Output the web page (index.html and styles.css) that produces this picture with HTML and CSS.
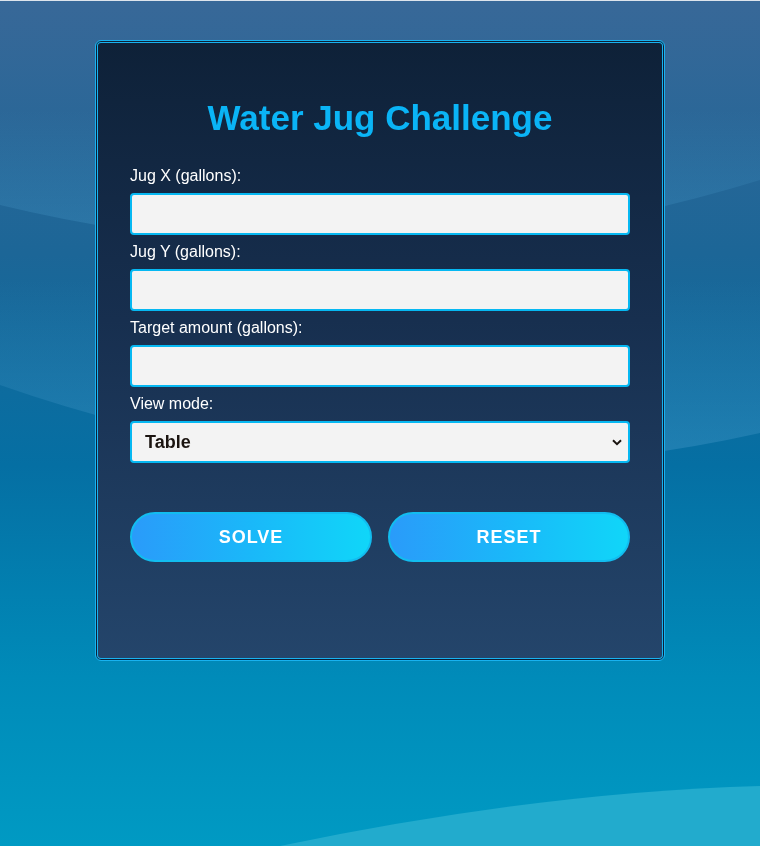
FILE: index.html
```html
<!DOCTYPE html>
<html lang="en">
<head>
<meta charset="utf-8">
<title>Water Jug Challenge</title>
<link rel="stylesheet" href="styles.css">
</head>
<body>
<svg class="bg" viewBox="0 0 760 846" preserveAspectRatio="none" aria-hidden="true">
  <defs>
    <linearGradient id="sea" x1="0" y1="0" x2="0" y2="1">
      <stop offset="0" stop-color="#386898"/>
      <stop offset="0.3" stop-color="#1c6697"/>
      <stop offset="0.55" stop-color="#056fa3"/>
      <stop offset="0.8" stop-color="#008bb9"/>
      <stop offset="1" stop-color="#009ac3"/>
    </linearGradient>
    <linearGradient id="band1" gradientUnits="userSpaceOnUse" x1="0" y1="110" x2="0" y2="240">
      <stop offset="0" stop-color="#4a9ccc" stop-opacity="0"/>
      <stop offset="1" stop-color="#4a9ccc" stop-opacity="0.32"/>
    </linearGradient>
    <linearGradient id="band2" gradientUnits="userSpaceOnUse" x1="0" y1="280" x2="0" y2="450">
      <stop offset="0" stop-color="#4a9ccc" stop-opacity="0"/>
      <stop offset="1" stop-color="#4a9ccc" stop-opacity="0.36"/>
    </linearGradient>
  </defs>
  <rect width="760" height="846" fill="url(#sea)"/>
  <path d="M0,60 L760,60 L760,180 Q380,297 0,205 Z" fill="url(#band1)"/>
  <path d="M0,240 L760,240 L760,433 Q380,518 0,385 Z" fill="url(#band2)"/>
  <path d="M280,846 Q540,792 760,786 L760,846 Z" fill="#22abcd"/>
  <rect width="760" height="1" fill="#dde4ec"/>
</svg>

<main class="card">
  <h1 class="title">Water Jug Challenge</h1>
  <form class="form">
    <label class="label" for="jugx">Jug X (gallons):</label>
    <input class="field" id="jugx" type="number">
    <label class="label" for="jugy">Jug Y (gallons):</label>
    <input class="field" id="jugy" type="number">
    <label class="label" for="target">Target amount (gallons):</label>
    <input class="field" id="target" type="number">
    <label class="label" for="mode">View mode:</label>
    <select class="field select" id="mode">
      <option>Table</option>
      <option>Steps</option>
    </select>
    <div class="actions">
      <button type="button" class="btn">SOLVE</button>
      <button type="reset" class="btn">RESET</button>
    </div>
  </form>
</main>
</body>
</html>
```

FILE: styles.css
```css
* { box-sizing: border-box; }

html, body {
  margin: 0;
  padding: 0;
}

body {
  min-height: 100vh;
  font-family: "Liberation Sans", Arial, sans-serif;
  color: #fff;
  padding-top: 40px;
  padding-bottom: 1px;
}

.bg {
  position: fixed;
  inset: 0;
  width: 100%;
  height: 100%;
  z-index: -1;
  display: block;
}

.card {
  width: 570px;
  margin: 0 auto;
  padding: 34px 34px 98px;
  border: 1px solid #18b2f0;
  border-radius: 6px;
  background: linear-gradient(180deg, #0e2138 0%, #172f4f 45%, #24456b 100%);
  box-shadow: inset 0 0 0 1px #0e2036, inset 0 0 0 2px #18b2f0;
}

.title {
  margin: 23px 0 29px;
  font-size: 35px;
  line-height: 40px;
  font-weight: bold;
  text-align: center;
  color: #0ab4f6;
}

.form {
  display: flex;
  flex-direction: column;
  margin: 0;
}

.label {
  display: block;
  font-size: 16px;
  line-height: 18px;
  margin-bottom: 8px;
  color: #fff;
}

.field {
  display: block;
  width: 100%;
  height: 42px;
  margin: 0 0 8px;
  padding: 0 12px;
  border: 2px solid #06b8f2;
  border-radius: 4px;
  background-color: #f3f3f3;
  font-family: "Liberation Sans", Arial, sans-serif;
  font-size: 18px;
  font-weight: bold;
  color: #1b1410;
  outline: none;
}

.select {
  -webkit-appearance: none;
  appearance: none;
  padding: 0 24px 0 13px;
  background-image: url("data:image/svg+xml,%3Csvg xmlns='http://www.w3.org/2000/svg' width='10' height='7' viewBox='0 0 10 7'%3E%3Cpath d='M1 1.2 L5 5.2 L9 1.2' fill='none' stroke='%231b1410' stroke-width='2'/%3E%3C/svg%3E");
  background-repeat: no-repeat;
  background-position: right 6px center;
  background-size: 10px 7px;
}

.actions {
  display: flex;
  gap: 16px;
  margin-top: 41px;
}

.btn {
  flex: 1;
  height: 50px;
  border: 2px solid #12bdf0;
  border-radius: 25px;
  background: linear-gradient(90deg, #2a9bfa 0%, #1ab8f9 50%, #10d6f9 100%);
  color: #fff;
  font-family: "Liberation Sans", Arial, sans-serif;
  font-size: 18px;
  font-weight: bold;
  letter-spacing: 1px;
  cursor: pointer;
}
```
